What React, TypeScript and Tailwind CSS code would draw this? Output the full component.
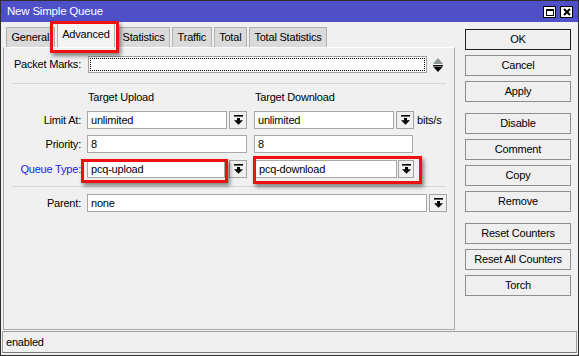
import React from 'react';

const TABS = ['General', 'Advanced', 'Statistics', 'Traffic', 'Total', 'Total Statistics'];

const BUTTON_GROUPS: string[][] = [
  ['OK', 'Cancel', 'Apply'],
  ['Disable', 'Comment', 'Copy', 'Remove'],
  ['Reset Counters', 'Reset All Counters', 'Torch'],
];

function DropIcon() {
  return (
    <svg width="9" height="10" viewBox="0 0 9 10">
      <rect x="0" y="0" width="9" height="1.6" fill="#000" />
      <path d="M3 3h3v2.2h3L4.5 9.8 0 5.2h3z" fill="#000" />
    </svg>
  );
}

function DropButton({ w = 18 }: { w?: number }) {
  return (
    <div
      className="h-[18px] flex items-center justify-center border border-[#a3a3a3] bg-[#f0f0f0]"
      style={{ width: w }}
    >
      <DropIcon />
    </div>
  );
}

function Field({ value, w }: { value: string; w: number }) {
  return (
    <div
      className="h-[18px] border border-[#a7a7a7] bg-white pl-[3px] flex items-center text-black leading-none"
      style={{ width: w }}
    >
      {value}
    </div>
  );
}

function Label({ text, blue = false }: { text: string; blue?: boolean }) {
  return (
    <div className={`w-[77px] text-right shrink-0 ${blue ? 'text-[#1a1ae6]' : 'text-black'}`}>{text}</div>
  );
}

export default function App() {
  return (
    <div className="w-[579px] h-[356px] relative border border-[#2e2e2e] bg-[#f0f0f0] flex flex-col overflow-hidden text-[11px] leading-[13px] tracking-[-0.2px] font-['Liberation_Sans',Arial,sans-serif]">
      {/* Title bar */}
      <div className="h-[21px] bg-[#4f50c8] flex items-center justify-between pl-[6px] pr-[5px] text-white">
        <span className="text-[11.5px]">New Simple Queue</span>
        <div className="flex gap-[4px] mt-[1px]">
          <div className="w-[13px] h-[12px] bg-white border border-black flex items-center justify-center">
            <div className="w-[8px] h-[7px] border border-black border-t-2" />
          </div>
          <div className="w-[13px] h-[12px] bg-white border border-black flex items-center justify-center">
            <svg width="8" height="8" viewBox="0 0 8 8">
              <path d="M1 1L7 7M7 1L1 7" stroke="#000" strokeWidth="2" />
            </svg>
          </div>
        </div>
      </div>

      <div className="h-[308px] flex">
        {/* Left: tabs + panel */}
        <div className="w-[454px] flex flex-col">
          <div className="h-[25px] flex items-end pl-[5px] gap-[2px]">
            {TABS.map((t) => (
              <div
                key={t}
                className={`px-[4.5px] flex items-center border border-b-0 border-[#b0b0b0] text-black ${
                  t === 'Advanced' ? 'h-[24px] bg-[#f4f4f4] pb-[3px]' : 'h-[20px] bg-[#dadada]'
                }`}
              >
                {t}
              </div>
            ))}
          </div>

          <div className="ml-[2px] flex-1 border border-[#a8a8a8] border-t-[#ffffff] bg-[#f0f0f0] flex flex-col">
            {/* Packet Marks */}
            <div className="mt-[8px] flex items-center">
              <Label text="Packet Marks:" />
              <div className="ml-[7px] w-[339px] h-[17px] border border-[#a0a0a0] bg-white p-[1px]">
                <div className="w-full h-full border border-dotted border-black" />
              </div>
              <div className="ml-[6px]">
                <svg width="10" height="14" viewBox="0 0 10 14">
                  <path d="M5 0L10 6H0z" fill="#8b948f" />
                  <rect x="0" y="7" width="10" height="1" fill="#000" />
                  <path d="M0 8.5h10L5 14z" fill="#000" />
                </svg>
              </div>
            </div>

            <div className="mt-[10px] ml-[8px] mr-[8px] h-px bg-[#d6d6d6]" />

            {/* Column headers */}
            <div className="mt-[7px] flex text-black">
              <div className="ml-[84px] w-[167px]">Target Upload</div>
              <div>Target Download</div>
            </div>

            {/* Limit At */}
            <div className="mt-[7px] flex items-center">
              <Label text="Limit At:" />
              <div className="ml-[6px] flex gap-[2px]">
                <Field value="unlimited" w={140} />
                <DropButton />
              </div>
              <div className="ml-[7px] flex gap-[2px]">
                <Field value="unlimited" w={140} />
                <DropButton />
              </div>
              <span className="ml-[3px] text-black">bits/s</span>
            </div>

            {/* Priority */}
            <div className="mt-[6px] flex items-center">
              <Label text="Priority:" />
              <div className="ml-[6px]">
                <Field value="8" w={160} />
              </div>
              <div className="ml-[7px]">
                <Field value="8" w={159} />
              </div>
            </div>

            {/* Queue Type */}
            <div className="mt-[7px] flex items-center">
              <Label text="Queue Type:" blue />
              <div className="ml-[6px] flex gap-[4px]">
                <Field value="pcq-upload" w={138} />
                <DropButton />
              </div>
              <div className="ml-[8px] flex gap-[1px]">
                <Field value="pcq-download" w={142} />
                <DropButton w={16} />
              </div>
            </div>

            <div className="mt-[8px] ml-[8px] mr-[8px] h-px bg-[#d6d6d6]" />

            {/* Parent */}
            <div className="mt-[7px] flex items-center">
              <Label text="Parent:" />
              <div className="ml-[6px] flex gap-[2px]">
                <Field value="none" w={340} />
                <DropButton />
              </div>
            </div>
          </div>
        </div>

        {/* Right button column */}
        <div className="ml-[10px] w-[106px] pt-[7px] flex flex-col">
          {BUTTON_GROUPS.map((group, gi) => (
            <div key={gi} className={`flex flex-col gap-[5px] ${gi > 0 ? 'mt-[11px]' : ''}`}>
              {group.map((b) => (
                <div
                  key={b}
                  className={`h-[21px] flex items-center justify-center bg-[#efefef] text-black border ${
                    b === 'OK' ? 'border-[#1e1e1e]' : 'border-[#8e8e8e]'
                  }`}
                >
                  {b}
                </div>
              ))}
            </div>
          ))}
        </div>
      </div>

      {/* Status bar */}
      <div className="mt-[1px] mx-[1px] h-[22px] border border-[#a0a0a0] border-b-[#7a7a7a] flex items-center pl-[3px] text-black">
        enabled
      </div>

      {/* Red highlight boxes */}
      <div className="absolute left-[49px] top-[20px] w-[69px] h-[32px] border-[3px] border-[#f01010] shadow-[2px_3px_4px_rgba(0,0,0,0.45)]" />
      <div className="absolute left-[80px] top-[158px] w-[147px] h-[24px] border-[3px] border-[#f01010] shadow-[2px_3px_4px_rgba(0,0,0,0.45)]" />
      <div className="absolute left-[252px] top-[155px] w-[169px] h-[28px] border-[3px] border-[#f01010] shadow-[2px_3px_4px_rgba(0,0,0,0.45)]" />
    </div>
  );
}
